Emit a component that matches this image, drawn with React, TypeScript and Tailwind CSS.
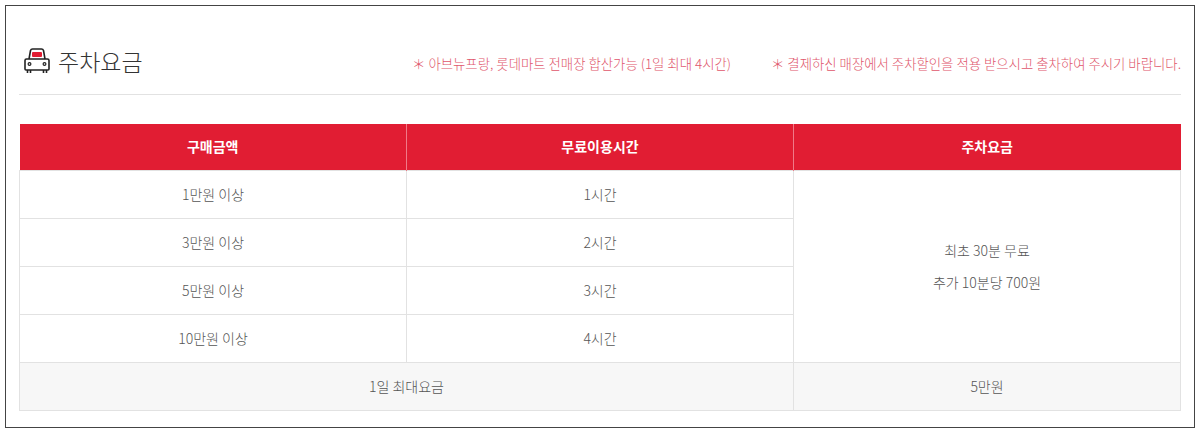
import React from "react";

const CarIcon = () => (
  <svg width="30" height="28" viewBox="0 0 30 28" fill="none">
    <path d="M7 12 L8.5 3.5 Q9 2 10.5 2 H19.5 Q21 2 21.5 3.5 L23 12" stroke="#222" strokeWidth="1.6" strokeLinejoin="round" />
    <rect x="10" y="5" width="10" height="5" rx="1" fill="#e11d33" />
    <path d="M3 13.5 Q3 12 4.5 12 H25.5 Q27 12 27 13.5 V22 Q27 23 26 23 H4 Q3 23 3 22 Z" stroke="#222" strokeWidth="1.6" />
    <circle cx="7.5" cy="17" r="1.4" stroke="#222" strokeWidth="1.2" />
    <circle cx="22.5" cy="17" r="1.4" stroke="#222" strokeWidth="1.2" />
    <path d="M5.5 23 V26 M8.5 23 V26 M21.5 23 V26 M24.5 23 V26" stroke="#222" strokeWidth="1.6" />
  </svg>
);

const rows = [
  { amount: "1만원 이상", time: "1시간" },
  { amount: "3만원 이상", time: "2시간" },
  { amount: "5만원 이상", time: "3시간" },
  { amount: "10만원 이상", time: "4시간" },
];

export default function App() {
  return (
    <div
      className="h-[433px] w-[1200px] bg-white p-[5px]"
      style={{ fontFamily: '"Noto Sans CJK KR", "Noto Sans", sans-serif' }}
    >
      <div className="h-[423px] border-[1.5px] border-[#444] px-[13px] pt-[39px]">
        <div className="flex items-center border-b border-[#e2e2e2] pb-[17px] pl-[3px]">
          <div className="flex items-center gap-[6px]">
            <CarIcon />
            <h2 className="text-[23px] font-light leading-[32px] text-[#333]">주차요금</h2>
          </div>
          <div className="ml-auto flex gap-[40px] pt-[5px] text-[13.4px] font-light text-[#e0566b]">
            <p>＊ 아브뉴프랑, 롯데마트 전매장 합산가능 (1일 최대 4시간)</p>
            <p>＊ 결제하신 매장에서 주차할인을 적용 받으시고 출차하여 주시기 바랍니다.</p>
          </div>
        </div>

        <table className="mt-[29px] w-full table-fixed border-collapse text-center text-[14px] font-light text-[#555]">
          <thead>
            <tr className="h-[46px] bg-[#e11d33] text-white">
              <th className="border-r border-[#f07a88] font-bold">구매금액</th>
              <th className="border-r border-[#f07a88] font-bold">무료이용시간</th>
              <th className="font-bold">주차요금</th>
            </tr>
          </thead>
          <tbody>
            {rows.map((r, i) => (
              <tr key={r.amount} className="h-[48px]">
                <td className="border border-[#e2e2e2]">{r.amount}</td>
                <td className="border border-[#e2e2e2]">{r.time}</td>
                {i === 0 && (
                  <td rowSpan={4} className="border border-[#e2e2e2] leading-[32px]">
                    최초 30분 무료
                    <br />
                    추가 10분당 700원
                  </td>
                )}
              </tr>
            ))}
            <tr className="h-[48px] bg-[#f7f7f7]">
              <td colSpan={2} className="border border-[#e2e2e2]">1일 최대요금</td>
              <td className="border border-[#e2e2e2]">5만원</td>
            </tr>
          </tbody>
        </table>
      </div>
    </div>
  );
}
